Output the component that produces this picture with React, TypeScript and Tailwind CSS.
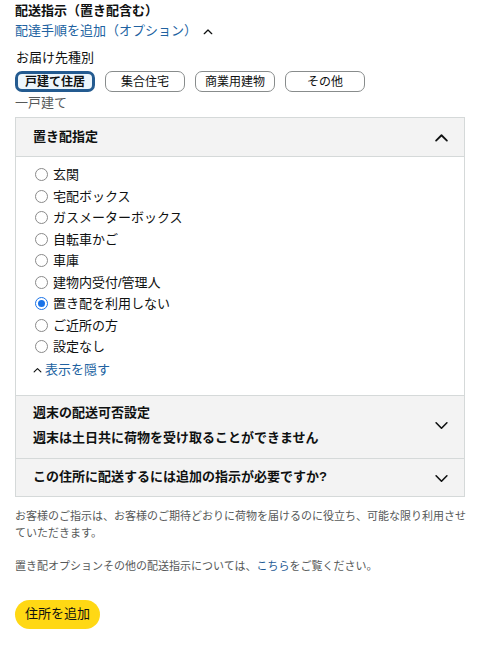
import React, { useState } from 'react';

const FONT = '"Liberation Sans", "Noto Sans CJK JP", sans-serif';

const ChevronUp: React.FC<{ className?: string }> = ({ className }) => (
    <svg viewBox="0 0 16 10" className={className} fill="none" stroke="currentColor" strokeWidth="2" strokeLinecap="round" strokeLinejoin="round">
        <path d="M2 8.5 L8 2.5 L14 8.5" />
    </svg>
);

const ChevronDown: React.FC<{ className?: string }> = ({ className }) => (
    <svg viewBox="0 0 16 10" className={className} fill="none" stroke="currentColor" strokeWidth="1.8" strokeLinecap="round" strokeLinejoin="round">
        <path d="M2 2 L8 8 L14 2" />
    </svg>
);

const placeOptions = [
    '玄関',
    '宅配ボックス',
    'ガスメーターボックス',
    '自転車かご',
    '車庫',
    '建物内受付/管理人',
    '置き配を利用しない',
    'ご近所の方',
    '設定なし',
];

const addressTypes = ['戸建て住居', '集合住宅', '商業用建物', 'その他'];

const App: React.FC = () => {
    const [selectedType, setSelectedType] = useState('戸建て住居');
    const [selectedPlace, setSelectedPlace] = useState('置き配を利用しない');

    return (
        <div className="min-h-screen bg-white pl-[15px] pr-[27px] text-[#0f1111]" style={{ fontFamily: FONT }}>
            {/* heading */}
            <div className="pt-[1px] text-[13px] font-bold leading-[20px]">配送指示（置き配含む）</div>
            <div className="flex items-center text-[13px] leading-[20px] text-[#2162a1]">
                <span>配達手順を追加（オプション）</span>
                <ChevronUp className="ml-[6px] h-[7px] w-[10px] text-[#0f1111]" />
            </div>

            {/* address type */}
            <div className="mt-[7px] pl-[1px] text-[13px] leading-[20px]">お届け先種別</div>
            <div className="mt-[3px] flex gap-[10px]">
                {addressTypes.map(t => (
                    <button
                        key={t}
                        onClick={() => setSelectedType(t)}
                        className={
                            t === selectedType
                                ? 'flex h-[21px] w-[80px] items-center justify-center rounded-[7px] border-[3px] border-[#245b90] bg-[#edf6fc] text-[12px] font-bold leading-none'
                                : 'flex h-[21px] w-[80px] items-center justify-center rounded-[7px] border border-[#888c8c] bg-white text-[12px] leading-none'
                        }
                    >
                        {t}
                    </button>
                ))}
            </div>
            <div className="mt-[1px] text-[13px] leading-[20px] text-[#565959]">一戸建て</div>

            {/* accordion */}
            <div className="mt-[4px] border border-[#d5d9d9]">
                <div className="flex h-[38px] items-center justify-between bg-[#f3f3f3] pl-[17px] pr-[15px]">
                    <span className="text-[13px] font-bold">置き配指定</span>
                    <ChevronUp className="h-[9px] w-[15px]" />
                </div>
                <div className="border-t border-[#d5d9d9] pb-[15px] pl-[19px] pt-[7px]">
                    {placeOptions.map(p => (
                        <label key={p} className="flex h-[21.5px] cursor-pointer items-center text-[13px]">
                            {p === selectedPlace ? (
                                <span className="flex h-[13px] w-[13px] shrink-0 items-center justify-center rounded-full border border-[#1a73e8] bg-white">
                                    <span className="h-[7px] w-[7px] rounded-full bg-[#1a73e8]" />
                                </span>
                            ) : (
                                <span className="h-[13px] w-[13px] shrink-0 rounded-full border border-[#8a8a8a] bg-white" />
                            )}
                            <input
                                type="radio"
                                className="hidden"
                                checked={p === selectedPlace}
                                onChange={() => setSelectedPlace(p)}
                            />
                            <span className="ml-[5px]">{p}</span>
                        </label>
                    ))}
                    <div className="-ml-[2px] mt-[2px] flex h-[20px] items-center text-[13px] text-[#2162a1]">
                        <ChevronUp className="mr-[3px] h-[6px] w-[9px] text-[#0f1111]" />
                        <span>表示を隠す</span>
                    </div>
                </div>

                <div className="flex items-center justify-between border-t border-[#d5d9d9] bg-[#f3f3f3] pb-[10px] pl-[17px] pr-[15px] pt-[7px]">
                    <div className="text-[13px] font-bold">
                        <div className="leading-[20px]">週末の配送可否設定</div>
                        <div className="mt-[5px] leading-[20px]">週末は土日共に荷物を受け取ることができません</div>
                    </div>
                    <ChevronDown className="h-[9px] w-[15px]" />
                </div>

                <div className="flex h-[38px] items-center justify-between border-t border-[#d5d9d9] bg-[#f3f3f3] pl-[17px] pr-[15px]">
                    <span className="text-[13px] font-bold">この住所に配送するには追加の指示が必要ですか?</span>
                    <ChevronDown className="mt-[3px] h-[9px] w-[15px]" />
                </div>
            </div>

            {/* notes */}
            <p className="mt-[11px] w-[460px] text-[11px] leading-[17px] text-[#565959]">
                お客様のご指示は、お客様のご期待どおりに荷物を届けるのに役立ち、可能な限り利用させていただきます。
            </p>
            <p className="mt-[16px] text-[11px] leading-[17px] text-[#565959]">
                置き配オプションその他の配送指示については、<span className="text-[#1e5a94]">こちら</span>をご覧ください。
            </p>

            <button className="mt-[25px] flex h-[29px] w-[85px] items-center justify-center rounded-full bg-[#ffd814] text-[13px]">
                住所を追加
            </button>
        </div>
    );
};

export default App;
